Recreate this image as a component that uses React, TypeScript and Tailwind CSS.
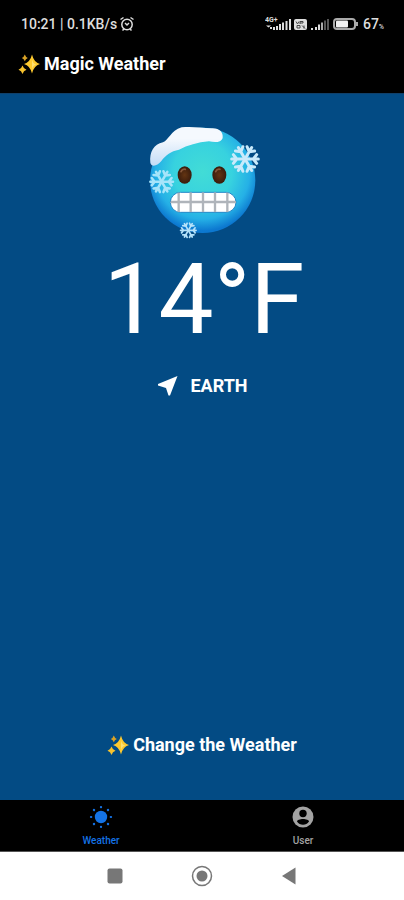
function Sparkles({ className }: { className?: string }) {
    return (
        <svg viewBox="0 0 22 22" className={className} aria-hidden="true">
            <path d="M14 1.500Q15.800 9.200 22 11Q15.800 12.800 14 20.500Q12.200 12.800 6 11Q12.200 9.200 14 1.500z" fill="#fdc92f" />
            <path d="M14 6q.6 4.800 4.500 5.500q-3.900.7-4.500 5.500z" fill="#fff0a0" opacity=".6" />
            <path d="M4.500 12.500q1 3.200 4 4.200q-3 1-4 4.200q-1-3.200-4-4.200q3-1 4-4.200z" fill="#f8c32e" />
            <path d="M6.800 1.500q.8 2.600 3 3.400q-2.200.8-3 3.400q-.8-2.600-3-3.400q2.200-.8 3-3.400z" fill="#d9a226" />
        </svg>
    )
}

const flakeAngles = [0, 60, 120, 180, 240, 300]

function Snowflake({ x, y, size, color }: { x: number; y: number; size: number; color: string }) {
    return (
        <g transform={`translate(${x} ${y}) scale(${size})`} stroke={color} strokeWidth="9" strokeLinecap="round" fill="none">
            {flakeAngles.map((angle) => (
                <path key={angle} d="M0 0H40M25 0L35-13M25 0L35 13" transform={`rotate(${angle})`} />
            ))}
        </g>
    )
}

function ColdFace() {
    return (
        <svg viewBox="21 21 360 360" className="size-[120px]" role="img" aria-label="Freezing">
            <defs>
                <radialGradient id="skin" cx="50%" cy="42%" r="56%">
                    <stop offset="0" stopColor="#42dcd6" />
                    <stop offset=".5" stopColor="#37d2df" />
                    <stop offset=".8" stopColor="#25b0e6" />
                    <stop offset="1" stopColor="#0c78d0" />
                </radialGradient>
                <linearGradient id="snow" x1="0" y1="0" x2="0" y2="1">
                    <stop offset=".3" stopColor="#f5f9fe" />
                    <stop offset="1" stopColor="#c3dcf6" />
                </linearGradient>
                <radialGradient id="eye">
                    <stop offset="0" stopColor="#633412" />
                    <stop offset="1" stopColor="#3a1c0c" />
                </radialGradient>
                <clipPath id="mouth">
                    <rect x="106" y="232" width="197" height="60" rx="30" />
                </clipPath>
            </defs>
            <circle cx="203" cy="196" r="158" fill="url(#skin)" />
            <path
                d="M46 143C43 112 56 87 84 82C101 76 106 48 140 37C168 34 199 38 229 40C253 38 265 52 263 68C259 84 239 82 222 79C188 82 158 91 132 104C107 109 93 119 79 138C66 154 49 157 46 143Z"
                fill="url(#snow)"
            />
            <ellipse cx="149" cy="180" rx="21" ry="26" fill="url(#eye)" />
            <ellipse cx="253" cy="180" rx="21" ry="26" fill="url(#eye)" />
            <path d="M138 170q4-9 13-7M242 170q4-9 13-7" stroke="#88583a" strokeWidth="5" strokeLinecap="round" fill="none" />
            <rect x="106" y="232" width="197" height="60" rx="30" fill="#fff" stroke="#2388c8" strokeWidth="3" />
            <g clipPath="url(#mouth)" stroke="#afb4ba" strokeWidth="7">
                <path d="M106 261H303M131 232V292M167 232V292M204 232V292M240 232V292M277 232V292" />
            </g>
            <Snowflake x={330} y={132} size={1} color="#c9eafb" />
            <Snowflake x={80} y={200} size={0.85} color="#a6e4fa" />
            <Snowflake x={160} y={346} size={0.58} color="#b5e2fa" />
        </svg>
    )
}

function AlarmIcon() {
    return (
        <svg viewBox="0 0 16 16" className="size-4" fill="none" stroke="#ddd" strokeWidth="1.500" aria-hidden="true">
            <circle cx="8" cy="8.500" r="5.200" />
            <path d="M1.500 3.500L4.500 1.500M14.500 3.500L11.500 1.500M3.500 14.500L5 13M12.500 14.500L11 13M6 7L8 9L10 7" />
        </svg>
    )
}

function StatusIcons() {
    return (
        <svg viewBox="0 0 94 16" className="h-4 w-[94px]" aria-hidden="true">
            <text x="0" y="6" fontSize="7" fontWeight="700" fill="#ddd">
                4G+
            </text>
            <path
                d="M1 9.500h5l-2.500 2zM5 11h2v2H5zM8 11h2v3H8zM11 10h2v4h-2zM14 8h2v6h-2zM17 6.500h2V14h-2zM20.500 5h2v9h-2zM24 3h2v11h-2z"
                fill="#ddd"
            />
            <rect x="29" y="3" width="13" height="11" rx="2" fill="#ddd" />
            <path d="M31 5.500l1.500 2.500L34 5.500M35 8V5.500h3V7h-3M32 9.500h3v2.500h-3zM37 9.500l3 3M39 9.500v3" stroke="#444" fill="none" />
            <path d="M46 12h2v2h-2zM50 11h2v3h-2zM53 8.500h2V14h-2z" fill="#ddd" />
            <path d="M56 6.500h2V14h-2z" fill="#aaa" />
            <path d="M59 4.500h2V14h-2zM62 3h2v11h-2z" fill="#555" />
            <rect x="69" y="3" width="21" height="10" rx="3" fill="none" stroke="#aaa" strokeWidth="2" />
            <rect x="71" y="4.500" width="12" height="7" rx="1" fill="#f2f2f2" />
            <path d="M91 6h2v4h-2z" fill="#aaa" />
        </svg>
    )
}

const rayAngles = [0, 45, 90, 135, 180, 225, 270, 315]

function SunIcon() {
    return (
        <svg viewBox="0 0 24 24" className="size-6" fill="#1473e6" aria-hidden="true">
            <circle cx="12" cy="12" r="6.200" />
            {rayAngles.map((angle) => (
                <rect key={angle} x="20.700" y="10.900" width="2.400" height="2.200" rx="1" transform={`rotate(${angle} 12 12)`} />
            ))}
        </svg>
    )
}

function UserIcon() {
    return (
        <svg viewBox="0 0 24 24" className="size-6" aria-hidden="true">
            <circle cx="12" cy="12" r="10.500" fill="#a3a3a3" />
            <circle cx="12" cy="8.500" r="3.700" fill="#000" />
            <path d="M6 16.500c0-1.500 3-2.500 6-2.500s6 1 6 2.500c-1.500 2.300-3.600 3.300-6 3.300s-4.500-1-6-3.300z" fill="#000" />
        </svg>
    )
}

function App() {
    return (
        <div className="flex min-h-screen flex-col bg-[#034b84] font-[Roboto,sans-serif] text-white">
            <header className="bg-black pb-[13px]">
                <div className="flex h-12 items-center justify-between pr-5 pl-[21px] text-[#ddd]">
                    <div className="flex items-center gap-0.5 text-sm font-medium">
                        <span>10:21 | 0.1KB/s</span>
                        <AlarmIcon />
                    </div>
                    <div className="flex items-center gap-1">
                        <StatusIcons />
                        <span className="text-sm font-medium">
                            67<span className="text-[7px]">%</span>
                        </span>
                    </div>
                </div>
                <div className="flex items-center gap-1 pl-[18px]">
                    <Sparkles className="size-[22px]" />
                    <h1 className="text-lg leading-8 font-bold">Magic Weather</h1>
                </div>
            </header>

            <main className="flex flex-1 flex-col items-center border-t border-[#10406a] pt-7 pb-[41px]">
                <ColdFace />
                <div className="pl-1 text-[98px] leading-[116px]">14°F</div>
                <div className="mt-4 flex items-center gap-3 pl-0.5">
                    <svg viewBox="0 0 20 20" className="size-5" aria-hidden="true">
                        <path d="M0 8L19.500 0L12 19.500H10.500L8 12L0 9.500z" fill="#fff" />
                    </svg>
                    <span className="text-lg leading-6 font-bold">EARTH</span>
                </div>
                <button className="mt-auto flex items-center gap-1 text-lg font-bold">
                    <Sparkles className="size-[22px]" />
                    Change the Weather
                </button>
            </main>

            <nav className="grid h-[52px] grid-cols-2 border-b border-[#555] bg-black text-[10px] leading-3 font-medium">
                <button className="flex flex-col items-center gap-1.5 pt-[5px] text-[#1473e6]">
                    <SunIcon />
                    Weather
                </button>
                <button className="flex flex-col items-center gap-1.5 pt-[5px] text-[#a3a3a3]">
                    <UserIcon />
                    User
                </button>
            </nav>

            <div className="flex h-12 items-center justify-center gap-[63px] bg-white">
                <button aria-label="Recent apps">
                    <svg viewBox="0 0 24 24" className="size-6">
                        <rect x="4.500" y="4.500" width="15" height="15" rx="2" fill="#777" />
                    </svg>
                </button>
                <button aria-label="Home">
                    <svg viewBox="0 0 24 24" className="size-6">
                        <circle cx="12" cy="12" r="9.500" fill="none" stroke="#777" strokeWidth="1.500" />
                        <circle cx="12" cy="12" r="5.500" fill="#777" />
                    </svg>
                </button>
                <button aria-label="Back">
                    <svg viewBox="0 0 24 24" className="size-6">
                        <path d="M5 12L18.500 3.500v17z" fill="#777" />
                    </svg>
                </button>
            </div>
        </div>
    )
}

export default App
